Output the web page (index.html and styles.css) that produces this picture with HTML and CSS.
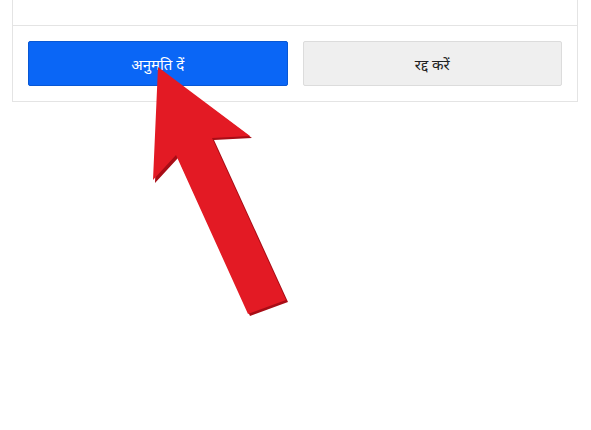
FILE: index.html
```html
<!DOCTYPE html>
<html lang="hi">
<head>
  <meta charset="UTF-8" />
  <meta name="viewport" content="width=device-width, initial-scale=1.0"/>
  <title>अनुमति</title>
  <link rel="stylesheet" href="styles.css">
</head>
<body>
  <div class="dialog">
    <div class="dialog-body"></div>
    <div class="dialog-footer">
      <button class="btn btn-allow">अनुमति दें</button>
      <button class="btn btn-cancel">रद्द करें</button>
    </div>
  </div>

  <svg class="pointer" width="591" height="430" viewBox="0 0 591 430">
    <polygon fill="#a80d16" points="159,69 252,138 214,140 288,302 250,316 178,158 155,183"/>
    <polygon fill="#e31a24" points="158,67 250,136 212,138 286,300 248,314 176,155 153,180"/>
  </svg>
</body>
</html>
```

FILE: styles.css
```css
:root {
  --border: #e4e4e4;
  --blue: #0a66f6;
  --radius: 2px;
}
* {
  margin: 0;
  padding: 0;
  box-sizing: border-box;
}
body {
  background: #fff;
  font-family: 'Noto Sans', 'Lohit Devanagari', 'Noto Sans Devanagari', sans-serif;
  position: relative;
  width: 591px;
  height: 430px;
  overflow: hidden;
}
.dialog {
  margin-left: 12px;
  width: 566px;
  border: 1px solid var(--border);
  border-top: 0;
  background: #fff;
}
.dialog-body {
  height: 26px;
  border-bottom: 1px solid var(--border);
}
.dialog-footer {
  display: flex;
  gap: 15px;
  padding: 15px;
}
.btn {
  flex: 1;
  height: 45px;
  border-radius: var(--radius);
  font-family: inherit;
  font-size: 15px;
  cursor: pointer;
}
.btn-allow {
  background: var(--blue);
  border: 1px solid #0857d4;
  color: #fff;
}
.btn-cancel {
  background: #efefef;
  border: 1px solid #dcdcdc;
  color: #222;
}
.pointer {
  position: absolute;
  top: 0;
  left: 0;
  pointer-events: none;
}
```
